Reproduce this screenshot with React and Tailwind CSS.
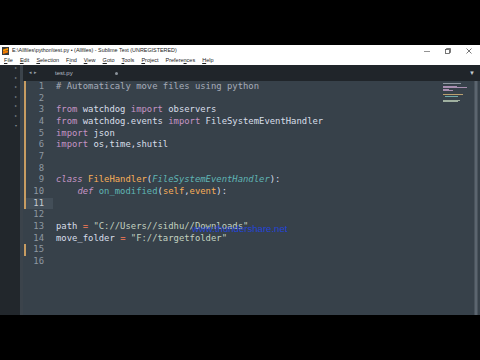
import React from "react";

const KW = "text-[#c594c5]";
const KWI = "text-[#c594c5] italic";
const TX = "text-[#d8dee9]";
const CM = "text-[#a6acb9]";
const CLS = "text-[#f9ae58]";
const INH = "text-[#5fb4b4] italic";
const FN = "text-[#5fb4b4]";
const PAR = "text-[#f9ae58]";
const OP = "text-[#f97b58]";
const STR = "text-[#c3d2c0]";

const lines = [
  [["# Automaticaly move files using python", CM]],
  [],
  [["from", KW], [" watchdog ", TX], ["import", KW], [" observers", TX]],
  [["from", KW], [" watchdog.events ", TX], ["import", KW], [" FileSystemEventHandler", TX]],
  [["import", KW], [" json", TX]],
  [["import", KW], [" os,time,shutil", TX]],
  [],
  [],
  [["class", KWI], [" ", TX], ["FileHandler", CLS], ["(", TX], ["FileSystemEventHandler", INH], ["):", TX]],
  [["    ", TX], ["def", KWI], [" ", TX], ["on_modified", FN], ["(", TX], ["self", PAR], [",", TX], ["event", PAR], ["):", TX]],
  [],
  [],
  [["path ", TX], ["=", OP], [" ", TX], ['"C://Users//sidhu//Downloads"', STR]],
  [["move_folder ", TX], ["=", OP], [" ", TX], ['"F://targetfolder"', STR]],
  [],
  [],
];

const modified = [1, 2, 3, 4, 5, 6, 7, 8, 9, 10, 11, 15];

function Menu({ pre, u, post }) {
  return (
    <span>
      {pre}
      <span className="underline">{u}</span>
      {post}
    </span>
  );
}

function Logo() {
  return (
    <svg width="7" height="8" viewBox="0 0 7 8">
      <rect x="0" y="0" width="7" height="8" fill="#3a3a3a" />
      <path d="M1 2.5 L6 1 L6 3 L1 4.5 Z" fill="#ff9800" />
      <path d="M1 4.5 L6 3.5 L6 5.5 L1 7 Z" fill="#f57c00" />
    </svg>
  );
}

export default function App() {
  return (
    <div className="w-[480px] h-[360px] bg-black flex flex-col overflow-hidden relative">
      <div className="h-[45px] shrink-0" />
      <div className="h-[270px] shrink-0 flex flex-col bg-white">
        {/* title bar */}
        <div className="h-[11px] flex items-center pl-[2px] pr-[8px] bg-white">
          <Logo />
          <span
            className="ml-[3px] text-[5.4px] text-[#222] leading-none whitespace-nowrap"
            style={{ fontFamily: '"Liberation Sans", Arial, sans-serif' }}
          >
            E:\Allfiles\python\test.py • (Allfiles) - Sublime Text (UNREGISTERED)
          </span>
          <div className="flex-1" />
          <div className="flex items-center gap-[15px] text-[#666]">
            <svg width="6" height="6" viewBox="0 0 6 6"><path d="M0 3.5 H6" stroke="#777" strokeWidth="0.8" /></svg>
            <svg width="6" height="6" viewBox="0 0 6 6"><rect x="0.5" y="1.5" width="4" height="4" fill="none" stroke="#555" strokeWidth="0.8" /><path d="M1.5 1.5 V0.5 H5.5 V4.5 H4.5" fill="none" stroke="#555" strokeWidth="0.8" /></svg>
            <svg width="6" height="6" viewBox="0 0 6 6"><path d="M0.5 0.5 L5.5 5.5 M5.5 0.5 L0.5 5.5" stroke="#555" strokeWidth="0.8" /></svg>
          </div>
        </div>
        {/* menu bar */}
        <div
          className="h-[9px] flex items-center pl-[4px] gap-[7px] text-[5.5px] text-[#222] leading-none bg-white"
          style={{ fontFamily: '"Liberation Sans", Arial, sans-serif' }}
        >
          <Menu u="F" post="ile" />
          <Menu u="E" post="dit" />
          <Menu u="S" post="election" />
          <Menu pre="F" u="i" post="nd" />
          <Menu u="V" post="iew" />
          <Menu u="G" post="oto" />
          <Menu u="T" post="ools" />
          <Menu u="P" post="roject" />
          <Menu pre="Prefere" u="n" post="ces" />
          <Menu u="H" post="elp" />
        </div>
        {/* body */}
        <div className="flex-1 flex min-h-0">
          {/* sidebar */}
          <div className="w-[20px] bg-[#22272c] flex flex-col items-end pr-[3px] pt-[1px] text-[#7d858d] text-[4px] leading-none gap-[5.6px]">
            <span>▸</span>
            <span>▸</span>
            <span>▸</span>
            <span>▸</span>
            <span>▸</span>
            <span>▸</span>
            <span>▾</span>
          </div>
          <div className="w-[3px] bg-[#3b434b]" />
          {/* main */}
          <div className="flex-1 flex flex-col min-w-0">
            {/* tabs */}
            <div className="h-[16px] bg-[#20252a] flex items-center relative">
              <span className="ml-[6px] text-[#9aa2aa] text-[5px] tracking-[2px]">◂▸</span>
              <div
                className="ml-[16px] w-[66px] h-full flex items-center justify-between pr-[3px]"
                style={{ fontFamily: '"Liberation Sans", Arial, sans-serif' }}
              >
                <span className="text-[#b7bec6] text-[6px]">test.py</span>
                <span className="w-[3px] h-[3px] rounded-full bg-[#8b939b]" />
              </div>
              <div className="flex-1" />
              <span className="mr-[5px] text-[#c6ccd2] text-[6px]">▼</span>
            </div>
            {/* editor */}
            <div className="flex-1 bg-[#37414a] flex min-h-0 relative">
              <div
                className="flex-1 flex flex-col text-[8.9px] leading-[11.67px] whitespace-pre"
                style={{ fontFamily: '"DejaVu Sans Mono", "Liberation Mono", monospace' }}
              >
                {lines.map((toks, i) => {
                  const n = i + 1;
                  const mod = modified.includes(n);
                  const cur = n === 11;
                  return (
                    <div key={n} className="h-[11.67px] flex">
                      <div className="w-[3px] flex justify-end">
                        <div className={mod ? "w-[2px] h-full bg-[#c79c62]" : "w-[2px] h-full"} />
                      </div>
                      <div
                        className={
                          cur
                            ? "w-[27px] pr-[9px] text-right text-[#c6ccd2] bg-[#434e58]"
                            : "w-[27px] pr-[9px] text-right text-[#8e98a1]"
                        }
                      >
                        {n}
                      </div>
                      <div className="pl-[3px]">
                        {toks.map((t, j) => (
                          <span key={j} className={t[1]}>
                            {t[0]}
                          </span>
                        ))}
                      </div>
                    </div>
                  );
                })}
              </div>
              {/* minimap */}
              <div className="w-[32px] flex flex-col gap-[0.6px] pt-[2px] pl-[2px]">
                <div className="h-[0.8px] w-[18px] bg-[#8f97a1]" />
                <div className="h-[0.8px] w-0" />
                <div className="h-[0.8px] w-[14px] bg-[#a98fb0]" />
                <div className="h-[0.8px] w-[24px] bg-[#a98fb0]" />
                <div className="h-[0.8px] w-[6px] bg-[#a98fb0]" />
                <div className="h-[0.8px] w-[10px] bg-[#a98fb0]" />
                <div className="h-[0.8px] w-0" />
                <div className="h-[0.8px] w-0" />
                <div className="h-[0.8px] w-[20px] bg-[#b9a06f]" />
                <div className="h-[0.8px] w-[13px] ml-[2px] bg-[#6fa9a9]" />
                <div className="h-[0.8px] w-0" />
                <div className="h-[0.8px] w-0" />
                <div className="h-[0.8px] w-[17px] bg-[#9fb0a0]" />
                <div className="h-[0.8px] w-[15px] bg-[#9fb0a0]" />
              </div>
              {/* scrollbar */}
              <div className="w-[7px] flex justify-center pr-[1px]">
                <div className="w-[4px] h-full bg-[#5b656f] border-x border-[#4a535c]" />
              </div>
            </div>
          </div>
        </div>
      </div>
      <div
        className="absolute left-[192px] top-[224px] text-[9.6px] text-[#2444d8] leading-none"
        style={{ fontFamily: '"Liberation Sans", Arial, sans-serif' }}
      >
        www.thundershare.net
      </div>
    </div>
  );
}
